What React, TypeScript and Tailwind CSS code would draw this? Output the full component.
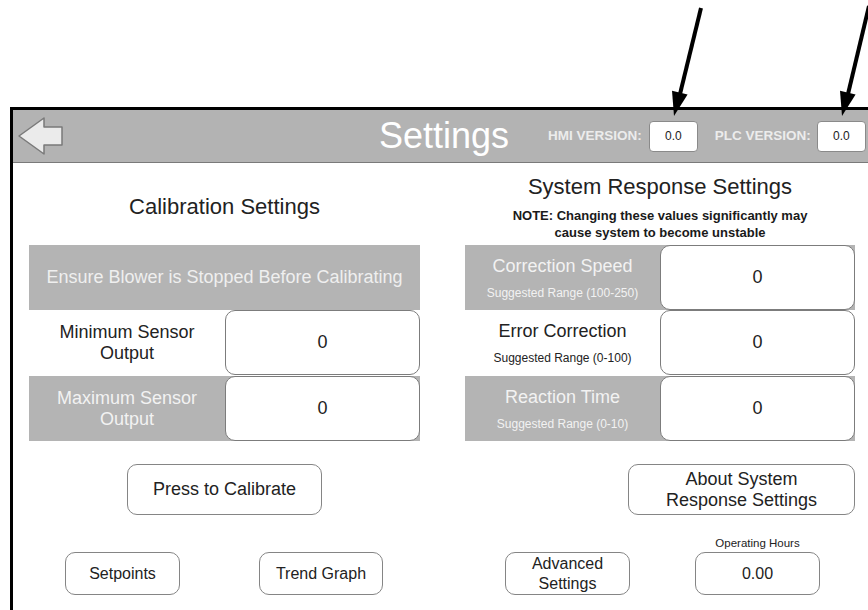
const font = { fontFamily: '"Liberation Sans", Arial, sans-serif' }

const BackArrow = () => (
  <svg width="46" height="40" viewBox="0 0 46 40" className="ml-[4px] shrink-0">
    <polygon
      points="2,20 27,2 27,11 45,11 45,29 27,29 27,38"
      fill="#ebebeb"
      stroke="#7a7a7a"
      strokeWidth="1.5"
      strokeLinejoin="round"
    />
  </svg>
)

const Annotations = () => (
  <svg width="868" height="130" className="absolute left-0 top-0 z-10 pointer-events-none">
    <line x1="701" y1="8" x2="680" y2="94" stroke="#000" strokeWidth="4" />
    <polygon points="674,116 687.6,94.6 672,90.8" fill="#000" />
    <line x1="869" y1="6" x2="848" y2="94" stroke="#000" strokeWidth="4" />
    <polygon points="842,116 855.6,94.6 840,90.8" fill="#000" />
  </svg>
)

const VersionBox = ({ value }: { value: string }) => (
  <div className="w-[49px] h-[31px] bg-white border border-[#8a8a8a] rounded-[4px] flex items-center justify-center text-[12px] text-[#222] shrink-0">
    {value}
  </div>
)

const ValueBox = ({ value }: { value: string }) => (
  <div className="w-[195px] h-full bg-white border-[1.5px] border-[#7c7c7c] rounded-[10px] flex items-center justify-center text-[18px] text-[#222]">
    {value}
  </div>
)

interface RowProps {
  label: string
  hint?: string
  shaded?: boolean
}

const Row = ({ label, hint, shaded }: RowProps) => (
  <div className={`flex h-[65px] ${shaded ? "bg-[#b4b4b4]" : ""}`}>
    <div
      className={`flex-1 flex flex-col items-center justify-center text-center ${
        shaded ? "text-[#f2f2f2]" : "text-[#222]"
      }`}
    >
      <span className="text-[18px] leading-[21px] w-[170px]">{label}</span>
      {hint && <span className="text-[12px] leading-[14px] mt-[9px]">{hint}</span>}
    </div>
    <ValueBox value="0" />
  </div>
)

const Button = ({ children, className }: { children: React.ReactNode; className: string }) => (
  <div
    className={`bg-white border-[1.5px] border-[#858585] rounded-[10px] flex items-center justify-center text-center text-[#222] ${className}`}
  >
    {children}
  </div>
)

const App = () => {
  return (
    <div className="relative w-[868px] h-[610px] bg-white overflow-hidden" style={font}>
      <Annotations />
      <div className="h-[107px]" />
      <div className="ml-[10px] h-[503px] border-t-[3px] border-l-[3px] border-black flex flex-col">
        <header className="h-[53px] bg-[#b3b3b3] border-b border-[#7a7a7a] flex items-center">
          <BackArrow />
          <h1 className="ml-[316px] text-[36px] text-white leading-none">Settings</h1>
          <span className="ml-[39px] text-[13.5px] font-bold text-[#ececec]">HMI VERSION:</span>
          <div className="ml-[7px]">
            <VersionBox value="0.0" />
          </div>
          <span className="ml-[17px] text-[13.5px] font-bold text-[#ececec]">PLC VERSION:</span>
          <div className="ml-[6px]">
            <VersionBox value="0.0" />
          </div>
        </header>

        <div className="flex pl-[16px] gap-[45px]">
          <section className="w-[391px] flex flex-col">
            <div className="h-[82px] pt-[31px] text-center text-[22px] leading-[26px] text-[#222]">
              Calibration Settings
            </div>
            <div className="h-[65px] bg-[#b4b4b4] flex items-center justify-center text-[18px] text-[#efefef]">
              Ensure Blower is Stopped Before Calibrating
            </div>
            <Row label="Minimum Sensor Output" />
            <div className="h-px" />
            <Row label="Maximum Sensor Output" shaded />
            <Button className="w-[195px] h-[51px] mt-[23px] self-center text-[18px]">
              Press to Calibrate
            </Button>
            <div className="flex mt-[37px]">
              <Button className="w-[115px] h-[43px] ml-[36px] text-[16px]">Setpoints</Button>
              <Button className="w-[124px] h-[43px] ml-[79px] text-[16px]">Trend Graph</Button>
            </div>
          </section>

          <section className="w-[390px] flex flex-col">
            <div className="h-[82px] pt-[11px] flex flex-col items-center text-[#222]">
              <h2 className="text-[22px] leading-[26px]">System Response Settings</h2>
              <p className="mt-[7px] text-[13px] leading-[17px] font-bold text-center text-[#1a1a1a]">
                NOTE: Changing these values significantly may
                <br />
                cause system to become unstable
              </p>
            </div>
            <Row label="Correction Speed" hint="Suggested Range (100-250)" shaded />
            <Row label="Error Correction" hint="Suggested Range (0-100)" />
            <div className="h-px" />
            <Row label="Reaction Time" hint="Suggested Range (0-10)" shaded />
            <Button className="w-[227px] h-[51px] mt-[23px] self-end text-[18px] leading-[21px]">
              About System
              <br />
              Response Settings
            </Button>
            <div className="flex items-end mt-[21px]">
              <Button className="w-[125px] h-[43px] ml-[40px] text-[16px] leading-[20px]">
                Advanced
                <br />
                Settings
              </Button>
              <div className="ml-[65px] flex flex-col items-center">
                <span className="text-[11.5px] leading-[14px] text-[#222] mb-[2px]">Operating Hours</span>
                <Button className="w-[125px] h-[43px] text-[16px]">0.00</Button>
              </div>
            </div>
          </section>
        </div>
      </div>
    </div>
  )
}

export default App
